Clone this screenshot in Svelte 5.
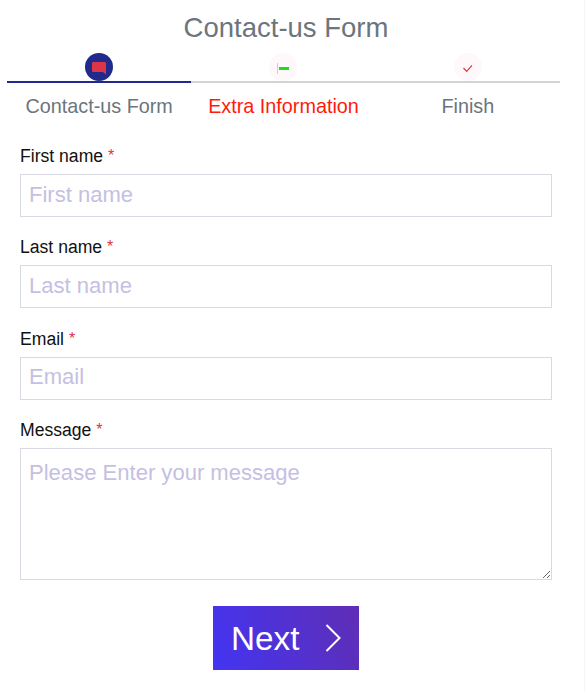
<script lang="ts">
    type Step = { title: string; icon: string; state: string };

    const steps: Step[] = [
        { title: 'Contact-us Form', icon: 'message', state: 'active' },
        { title: 'Extra Information', icon: 'extra', state: 'invalid' },
        { title: 'Finish', icon: 'check', state: '' }
    ];

    let firstName: string = '';
    let lastName: string = '';
    let email: string = '';
    let message: string = '';
</script>

<div class="wizard">
    <h4>Contact-us Form</h4>

    <ul class="steps">
        {#each steps as step}
            <li class={step.state}>
                <span class="circle">
                    <svg width="28" height="28" viewBox="0 0 28 28">
                        {#if step.icon === 'message'}
                            <path d="M8.2 9h11.6q1.2 0 1.2 1.2v11.3L17.8 19H8.2Q7 19 7 17.8v-7.6Q7 9 8.2 9z" fill="#dc3545" />
                        {:else if step.icon === 'extra'}
                            <path d="M8.5 10v11" stroke="#a3ecaa" stroke-width="1" />
                            <path d="M10 15.5h10" stroke="#16e016" stroke-width="3" />
                        {:else}
                            <path d="M9.5 15l3.2 3.3 5.3-6" stroke="#dc3545" stroke-width="1.2" fill="none" />
                        {/if}
                    </svg>
                </span>
                <span class="title">{step.title}</span>
            </li>
        {/each}
    </ul>

    <form on:submit|preventDefault>
        <div class="form-group">
            <label for="firstName">First name <span>*</span></label>
            <input id="firstName" type="text" placeholder="First name" bind:value={firstName} />
        </div>

        <div class="form-group">
            <label for="lastName">Last name <span>*</span></label>
            <input id="lastName" type="text" placeholder="Last name" bind:value={lastName} />
        </div>

        <div class="form-group">
            <label for="email">Email <span>*</span></label>
            <input id="email" type="email" placeholder="Email" bind:value={email} />
        </div>

        <div class="form-group">
            <label for="message">Message <span>*</span></label>
            <textarea id="message" placeholder="Please Enter your message" bind:value={message}></textarea>
        </div>

        <button type="submit">
            <span>Next</span>
            <svg width="18" height="30" viewBox="0 0 18 30">
                <path d="M1.5 2l13 13-13 13" fill="none" stroke="white" stroke-width="2" />
            </svg>
        </button>
    </form>
</div>

<style>
    :global(body) {
        background: white;
    }

    .wizard {
        box-sizing: border-box;
        height: 691px;
        border-right: 1px solid #f5f5f7;
        padding: 11px 24px 0 7px;
        font-family: Arial, "Liberation Sans", sans-serif;
    }

    h4 {
        margin: 0 0 8px;
        padding-left: 5px;
        color: #6c757d;
        font-size: 27.5px;
        font-weight: 400;
        line-height: 34px;
        text-align: center;
    }

    .steps {
        display: grid;
        grid-template-columns: repeat(3, 1fr);
        margin: 0;
        padding: 0;
        list-style: none;
    }

    .steps li {
        display: flex;
        flex-direction: column;
        align-items: center;
        color: #6c757d;
    }

    .circle {
        display: flex;
        justify-content: center;
        width: 100%;
        border-bottom: 2px solid #d3d3d3;
    }

    .circle svg {
        display: block;
        border-radius: 50%;
        background: #fff8fa;
    }

    .active .circle {
        border-bottom-color: #20298c;
    }

    .active .circle svg {
        background: #20298c;
    }

    .title {
        margin-top: 11px;
        font-size: 19.8px;
        line-height: 24px;
    }

    .invalid .title {
        color: #ff1a0a;
    }

    form {
        padding: 25px 8px 0 13px;
    }

    .form-group {
        margin-bottom: 17.3px;
    }

    label {
        display: block;
        margin-bottom: 5px;
        color: #111;
        font-size: 17.6px;
        line-height: 26px;
    }

    label span {
        position: relative;
        top: -1px;
        color: #dc3545;
        font-size: 16px;
        line-height: 1;
    }

    input,
    textarea {
        box-sizing: border-box;
        display: block;
        width: 100%;
        height: 43px;
        margin: 0;
        padding: 0 8px 2px;
        border: 1px solid #d9d9e3;
        border-radius: 0;
        outline: none;
        background: white;
        color: #111;
        font-family: inherit;
        font-size: 22.05px;
    }

    textarea {
        height: 132px;
        padding-top: 10px;
        line-height: 27px;
        resize: vertical;
    }

    input::placeholder,
    textarea::placeholder {
        color: #c5c0e2;
        opacity: 1;
    }

    button {
        display: flex;
        align-items: center;
        justify-content: space-between;
        width: 146px;
        height: 64px;
        margin: 26px auto 0;
        padding: 1px 16px 0 18px;
        border: none;
        background: linear-gradient(70deg, #4335f2 0%, #5f2eb5 100%);
        color: white;
        font-family: inherit;
        font-size: 33.3px;
        cursor: pointer;
    }

    button span {
        padding-top: 2px;
    }
</style>
